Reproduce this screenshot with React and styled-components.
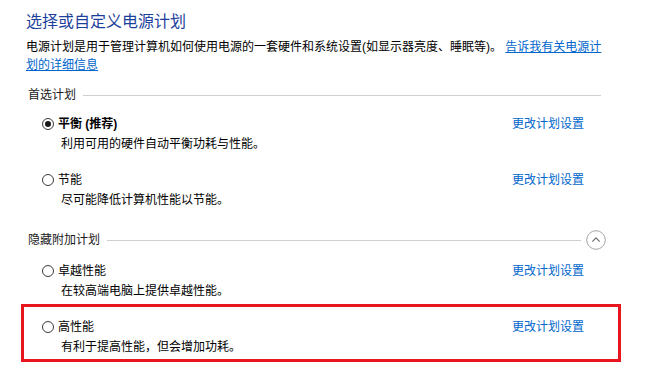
import React from 'react'
import styled, { createGlobalStyle } from 'styled-components'

const GlobalStyle = createGlobalStyle`
  html, body {
    margin: 0;
    padding: 0;
    background: #fff;
  }
  body {
    font-family: "Liberation Sans", "Noto Sans CJK SC", sans-serif;
    font-size: 12px;
    color: #000;
    overflow: hidden;
  }
`

const Page = styled.div`
  width: 657px;
  height: 374px;
  box-sizing: border-box;
  padding: 11px 0 0 26px;
`

const Content = styled.div`
  width: 575px;
`

const Title = styled.h1`
  margin: 0;
  font-size: 16px;
  line-height: 22px;
  font-weight: normal;
  color: #1d3f9c;
`

const Intro = styled.p`
  margin: 5px 0 0;
  width: 582px;
  line-height: 18px;
`

const Link = styled.a`
  color: #0066cc;
  text-decoration: ${p => (p.$underline ? 'underline' : 'none')};
  cursor: pointer;
`

const Section = styled.div`
  display: flex;
  align-items: center;
  height: 20px;
  margin: ${p => p.$top}px 0 ${p => p.$bottom}px;
  padding-left: 2px;
  line-height: 20px;
  color: #1a1a1a;

  &::after {
    content: '';
    flex: 1;
    height: 1px;
    margin-left: 7px;
    background: #cfcfcf;
    order: 1;
  }
`

const Toggle = styled.span`
  order: 2;
  display: flex;
  width: 20px;
  height: 20px;
  margin: 0 -5px 0 5px;
`

const Plan = styled.div`
  display: grid;
  grid-template-columns: 1fr auto;
  padding: 8px 17px 8px 16px;
  line-height: 20px;
`

const NameRow = styled.label`
  display: flex;
  align-items: center;
  font-weight: ${p => (p.$bold ? 'bold' : 'normal')};
`

const Radio = styled.span`
  position: relative;
  width: 12px;
  height: 12px;
  margin-right: 4px;
  box-sizing: border-box;
  border: 1px solid #3a3a3a;
  border-radius: 50%;

  &::after {
    content: '';
    display: ${p => (p.$checked ? 'block' : 'none')};
    position: absolute;
    left: 2px;
    top: 2px;
    width: 6px;
    height: 6px;
    border-radius: 50%;
    background: #1a1a1a;
  }
`

const PlanDesc = styled.div`
  grid-column: 1 / -1;
  padding-left: 19px;
`

const Highlight = styled.div`
  width: 600px;
  box-sizing: border-box;
  margin: -5px 0 0 -5px;
  padding: 2px 17px 2px 2px;
  border: 3px solid #e8151f;

  & > ${Plan} {
    padding-bottom: 0;
  }
`

const ChevronCircle = () => (
  <svg width="20" height="20" viewBox="0 0 20 20">
    <circle cx="10" cy="10" r="9.3" fill="#fff" stroke="#a3a3a3" strokeWidth="1" />
    <path d="M6.3 11.6 L10 7.9 L13.7 11.6" fill="none" stroke="#6e6e6e" strokeWidth="1.2" />
  </svg>
)

const PlanRow = ({ name, desc, checked, bold }) => (
  <Plan>
    <NameRow $bold={bold}>
      <Radio $checked={checked} />
      {name}
    </NameRow>
    <Link>更改计划设置</Link>
    <PlanDesc>{desc}</PlanDesc>
  </Plan>
)

export default function App() {
  return (
    <Page>
      <GlobalStyle />
      <Content>
        <Title>选择或自定义电源计划</Title>
        <Intro>
          电源计划是用于管理计算机如何使用电源的一套硬件和系统设置(如显示器亮度、睡眠等)。{' '}
          <Link $underline>告诉我有关电源计划的详细信息</Link>
        </Intro>

        <Section $top={11} $bottom={1}>首选计划</Section>
        <PlanRow name="平衡 (推荐)" desc="利用可用的硬件自动平衡功耗与性能。" checked bold />
        <PlanRow name="节能" desc="尽可能降低计算机性能以节能。" />

        <Section $top={12} $bottom={3}>
          隐藏附加计划
          <Toggle>
            <ChevronCircle />
          </Toggle>
        </Section>
        <PlanRow name="卓越性能" desc="在较高端电脑上提供卓越性能。" />
        <Highlight>
          <PlanRow name="高性能" desc="有利于提高性能，但会增加功耗。" />
        </Highlight>
      </Content>
    </Page>
  )
}
